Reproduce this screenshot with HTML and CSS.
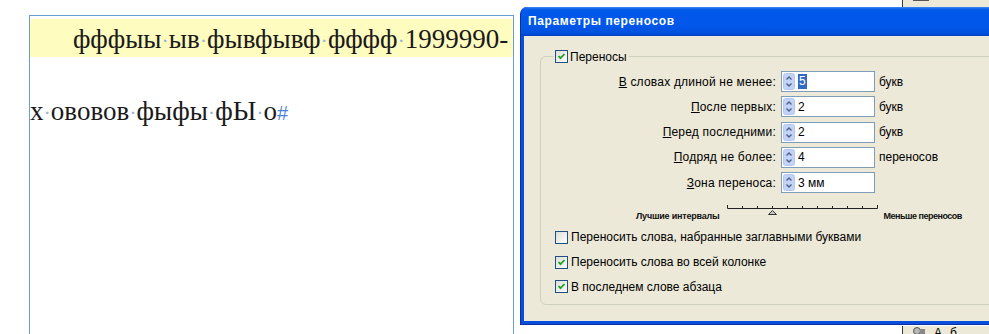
FILE: index.html
```html
<!DOCTYPE html>
<html>

<head>
    <title>Параметры переносов</title>
    <meta http-equiv="Content-Type" content="text/html; charset=utf-8" />
    <link rel="stylesheet" href="styles.css">
</head>

<body>
    <div class="desk">
        <div class="doc">
            <p class="para hl">фффыы<span class="sp">·</span>ыв<span class="sp">·</span>фывфывф<span class="sp">·</span>фффф<span class="sp">·</span>1999990-</p>
            <p class="para">х<span class="sp">·</span>ововов<span class="sp">·</span>фыфы<span class="sp">·</span>фЫ<span class="sp">·</span>о<span class="end">#</span></p>
        </div>

        <div class="panel panel-top"><span class="dash"></span></div>
        <div class="panel panel-bottom">
            <svg class="tool-icon" width="14" height="10" viewBox="0 0 14 10">
                <circle cx="5" cy="5" r="3.5" fill="#b8b8b8" stroke="#555" />
                <rect x="8" y="3" width="5" height="7" fill="#888" />
            </svg>
            <span class="tool-txt">А</span><span class="tool-txt">б</span>
        </div>

        <div class="dialog">
            <div class="titlebar">Параметры переносов</div>
            <div class="client">
                <fieldset class="group">
                    <legend class="legend"><span class="cb on"></span>Переносы</legend>
                    <div class="fields">
                        <span class="lbl"><u>В</u> словах длиной не менее:</span>
                        <span class="spin"><i class="arrows"></i><b class="sel">5</b></span>
                        <span class="unit">букв</span>

                        <span class="lbl"><u>П</u>осле первых:</span>
                        <span class="spin"><i class="arrows"></i>2</span>
                        <span class="unit">букв</span>

                        <span class="lbl"><u>П</u>еред последними:</span>
                        <span class="spin"><i class="arrows"></i>2</span>
                        <span class="unit">букв</span>

                        <span class="lbl"><u>П</u>одряд не более:</span>
                        <span class="spin"><i class="arrows"></i>4</span>
                        <span class="unit">переносов</span>

                        <span class="lbl"><u>З</u>она переноса:</span>
                        <span class="spin"><i class="arrows"></i>3 мм</span>
                        <span class="unit"></span>
                    </div>
                    <div class="slider">
                        <span class="slider-lbl left">Лучшие интервалы</span>
                        <svg class="track" width="152" height="12" viewBox="0 0 152 12">
                            <path d="M0.5 2v3.5h150V2M15.5 3v3M30.5 3v3M45.5 3v3M60.5 3v3M75.5 3v3M90.5 3v3M105.5 3v3M120.5 3v3M135.5 3v3" stroke="#222" fill="none" />
                            <path d="M45.5 7.5l-4 4h8z" fill="#c8c8c8" stroke="#333" />
                        </svg>
                        <span class="slider-lbl right">Меньше переносов</span>
                    </div>
                    <div class="checks">
                        <div class="check"><span class="cb"></span>Переносить слова, набранные заглавными буквами</div>
                        <div class="check"><span class="cb on"></span>Переносить слова во всей колонке</div>
                        <div class="check"><span class="cb on"></span>В последнем слове абзаца</div>
                    </div>
                </fieldset>
            </div>
        </div>
    </div>
</body>

</html>
```

FILE: styles.css
```css
body {
    margin: 0;
    background: #fff;
    overflow: hidden;
}
.desk {
    position: relative;
    width: 989px;
    height: 334px;
    overflow: hidden;
}

/* text frame */
.doc {
    margin: 15px 0 0 29px;
    width: 483px;
    height: 330px;
    border: 1px solid #6c9dd0;
    font-family: 'Liberation Serif', 'Noto Sans CJK SC', serif;
    font-size: 27px;
    color: #1a1a1a;
}
.para {
    margin: 0;
    height: 38px;
    line-height: 40px;
    white-space: nowrap;
}
.hl {
    margin-top: 3px;
    background: #fffcbf;
    padding-left: 43px;
}
.para + .para {
    margin-top: 34px;
}
.sp {
    color: #9ab2da;
    font-size: 22px;
}
.end {
    color: #4f82d6;
    font-family: 'Liberation Sans', sans-serif;
    font-size: 20px;
}

/* windows behind */
.panel {
    position: absolute;
    left: 902px;
    width: 87px;
    background: #ece9d8;
    border-left: 1px solid #3a3a3a;
}
.panel-top {
    top: 0;
    height: 7px;
}
.dash {
    display: block;
    margin: 0 0 0 10px;
    width: 16px;
    height: 1px;
    background: #555;
}
.panel-bottom {
    top: 326px;
    height: 8px;
    display: flex;
    align-items: flex-start;
    gap: 8px;
    padding-left: 9px;
    font: 12px 'Liberation Sans', sans-serif;
    line-height: 14px;
}

/* dialog */
.dialog {
    position: absolute;
    left: 520px;
    top: 7px;
    width: 500px;
    border: 1px solid #0831a8;
    border-top: none;
    border-radius: 7px 7px 0 0;
    background: #0a4fdc;
    padding: 0 4px 3px 3px;
    font-family: 'Liberation Sans', sans-serif;
    font-size: 12px;
    color: #000;
}
.titlebar {
    margin: 0 -4px 0 -3px;
    height: 29px;
    line-height: 28px;
    padding-left: 7px;
    border-radius: 7px 7px 0 0;
    background: linear-gradient(#3f8cf3 0, #0a5fe8 2px, #0059ec 5px, #0156e7 70%, #0150dc 90%, #003fc4 100%);
    color: #fff;
    font-weight: bold;
    font-size: 12px;
    letter-spacing: 0.6px;
}
.client {
    background: #ece9d8;
    height: 272px;
    padding: 13px 0 0 16px;
}
.group {
    margin: 0;
    padding: 0;
    height: 256px;
    border: 1px solid #d0d0bf;
    border-radius: 6px;
    box-sizing: border-box;
}
.legend {
    margin-left: 13px;
    padding: 0 2px 0 1px;
    display: flex;
    align-items: center;
    height: 15px;
}
.cb {
    display: inline-block;
    box-sizing: border-box;
    width: 13px;
    height: 13px;
    margin-right: 2px;
    border: 1px solid #1c5180;
    background: linear-gradient(135deg, #dcdcd7, #fff);
}
.cb.on {
    background: url("data:image/svg+xml,%3Csvg xmlns='http://www.w3.org/2000/svg' width='11' height='11'%3E%3Cpath d='M2.5 5l2 2.2L8.5 3' stroke='%2321a121' stroke-width='1.8' fill='none'/%3E%3C/svg%3E"), linear-gradient(135deg, #dcdcd7, #fff);
}

.fields {
    display: grid;
    grid-template-columns: 235px 94px auto;
    column-gap: 5px;
    row-gap: 4.25px;
    margin-top: 7px;
    align-items: center;
}
.lbl {
    text-align: right;
    white-space: nowrap;
    letter-spacing: 0.2px;
}
.lbl u {
    text-decoration: underline;
}
.spin {
    display: flex;
    align-items: center;
    height: 21px;
    box-sizing: border-box;
    border: 1px solid #7f9db9;
    background: #fff;
    padding-left: 1px;
}
.arrows {
    width: 12px;
    height: 17px;
    margin-right: 3px;
    background: url("data:image/svg+xml,%3Csvg xmlns='http://www.w3.org/2000/svg' width='12' height='17'%3E%3Crect x='0.5' y='0.5' width='11' height='16' rx='2' fill='%23c3d3f8' stroke='%23b4c6f0'/%3E%3Cpath d='M3.5 6.5l2.5-2.5 2.5 2.5M3.5 10.5l2.5 2.5 2.5-2.5' stroke='%234d6185' stroke-width='1.4' fill='none'/%3E%3C/svg%3E");
}
.sel {
    font-weight: normal;
    background: #316ac5;
    color: #fff;
    padding: 0 1px;
    line-height: 15px;
}
.unit {
    margin-left: -1px;
}

.slider {
    display: flex;
    align-items: flex-start;
    margin: 10px 0 0 95px;
    height: 22px;
}
.slider-lbl {
    font-size: 9px;
    font-weight: bold;
    letter-spacing: -0.2px;
    margin-top: 8px;
    color: #111;
}
.slider-lbl.left {
    margin-right: 7px;
}
.slider-lbl.right {
    letter-spacing: -0.5px;
}
.track {
    margin-right: 5px;
}
.checks {
    display: flex;
    flex-direction: column;
    margin: 0 0 0 14px;
}
.check {
    display: flex;
    align-items: center;
    height: 24.75px;
}
.check .cb {
    margin-right: 3px;
}
```
